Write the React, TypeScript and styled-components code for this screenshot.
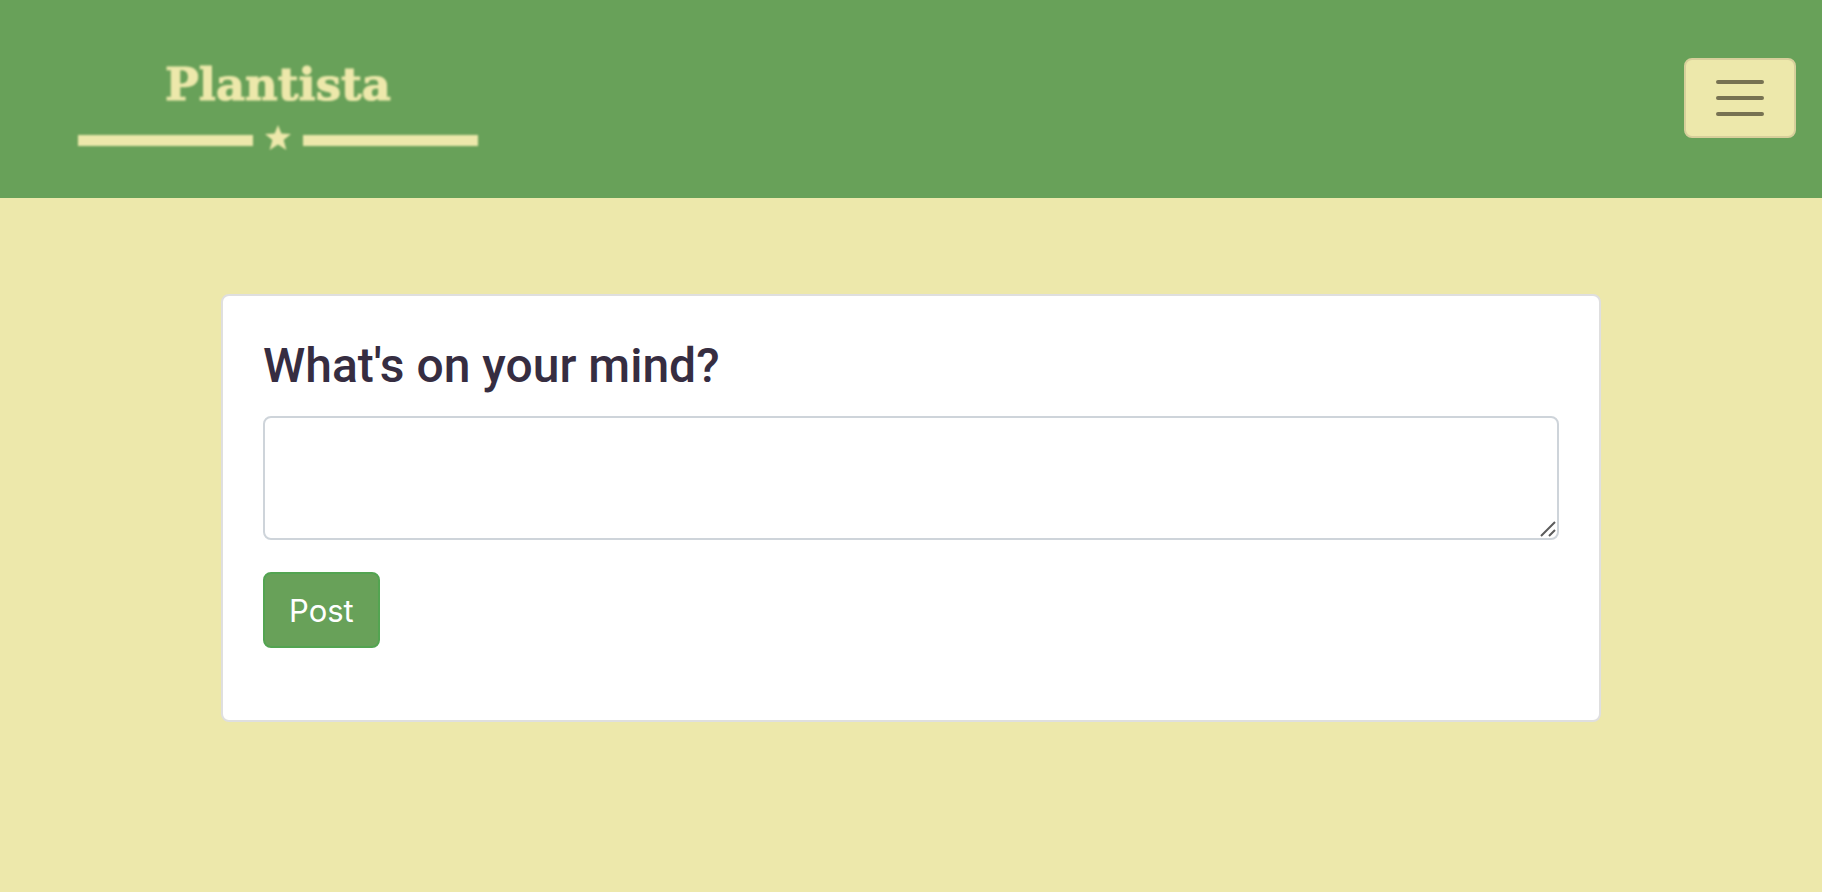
import React, { useState } from "react";
import styled, { createGlobalStyle } from "styled-components";

const green = "#68a159";
const cream = "#ede8ab";

const GlobalStyle = createGlobalStyle`
  *, *::before, *::after { box-sizing: border-box; }
  body {
    margin: 0;
    background: ${cream};
    color: #362d41;
    font-family: Inter, "Liberation Sans", sans-serif;
    font-size: 31px;
    line-height: 48px;
  }
`;

const Header = styled.header`
  display: flex;
  align-items: flex-start;
  justify-content: space-between;
  min-height: 198px;
  padding: 58px 26px 0 78px;
  background: ${green};
`;

const Brand = styled.a`
  display: flex;
  flex-direction: column;
  align-items: center;
  width: 400px;
  color: ${cream};
  text-decoration: none;
  filter: blur(1px);
`;

const BrandName = styled.span`
  font-family: "DejaVu Serif", serif;
  font-weight: 700;
  font-size: 45px;
  line-height: 54px;
  -webkit-text-stroke: 1px currentColor;
`;

const BrandRule = styled.svg`
  display: block;
  width: 400px;
  height: 28px;
  margin-top: 12px;
  fill: currentColor;
`;

const MenuToggle = styled.button`
  display: flex;
  align-items: center;
  justify-content: center;
  width: 112px;
  height: 80px;
  padding: 0;
  border: 2px solid #d7cf9b;
  border-radius: 8px;
  background: ${cream};
  cursor: pointer;
`;

const Main = styled.main`
  max-width: 1440px;
  margin: 0 auto;
  padding: 96px 30px;
`;

const Card = styled.form`
  display: flex;
  flex-direction: column;
  align-items: flex-start;
  padding: 40px 40px 72px;
  border: 2px solid #dfdfdf;
  border-radius: 8px;
  background: #fff;
`;

const Prompt = styled.label`
  margin-bottom: 20px;
  font-family: Roboto, Inter, sans-serif;
  font-size: 48px;
  font-weight: 500;
  line-height: 60px;
`;

const Field = styled.div`
  position: relative;
  width: 100%;
  margin-bottom: 32px;
`;

const MessageBox = styled.textarea`
  display: block;
  width: 100%;
  height: 124px;
  padding: 12px 24px;
  border: 2px solid #ced4da;
  border-radius: 8px;
  background: #fff;
  color: inherit;
  font: inherit;
  resize: vertical;
  outline: none;

  &::-webkit-resizer {
    background: transparent;
  }
`;

const Grip = styled.svg`
  position: absolute;
  right: 3px;
  bottom: 3px;
  width: 16px;
  height: 16px;
  pointer-events: none;
`;

const PostButton = styled.button`
  height: 76px;
  padding: 2px 24px 0;
  border: 2px solid #53a451;
  border-radius: 8px;
  background: ${green};
  color: #fff;
  font: inherit;
  cursor: pointer;
`;

export default function App() {
  const [message, setMessage] = useState("");

  return (
    <>
      <GlobalStyle />
      <Header>
        <Brand href="#">
          <BrandName>Plantista</BrandName>
          <BrandRule viewBox="0 0 400 28" aria-hidden="true">
            <rect x="0" y="11" width="175" height="11" />
            <path d="M200 1 L203.4 9.6 L213 10 L205.6 16 L208.4 26 L200 20.6 L191.6 26 L194.4 16 L187 10 L196.6 9.6 Z" />
            <rect x="225" y="11" width="175" height="11" />
          </BrandRule>
        </Brand>
        <MenuToggle type="button" aria-label="Toggle navigation">
          <svg width="60" height="60" viewBox="0 0 30 30" fill="none" aria-hidden="true">
            <path
              d="M4 7h22M4 15h22M4 23h22"
              stroke="#777252"
              strokeWidth="2"
              strokeLinecap="round"
              strokeMiterlimit="10"
            />
          </svg>
        </MenuToggle>
      </Header>
      <Main>
        <Card onSubmit={(event: React.FormEvent) => event.preventDefault()}>
          <Prompt htmlFor="message">What's on your mind?</Prompt>
          <Field>
            <MessageBox
              id="message"
              value={message}
              onChange={(event) => setMessage(event.target.value)}
            />
            <Grip viewBox="0 0 16 16" aria-hidden="true">
              <path d="M1 15 L15 1 M9 15 L15 9" stroke="#5c5c5c" strokeWidth="2" />
            </Grip>
          </Field>
          <PostButton type="submit">Post</PostButton>
        </Card>
      </Main>
    </>
  );
}
